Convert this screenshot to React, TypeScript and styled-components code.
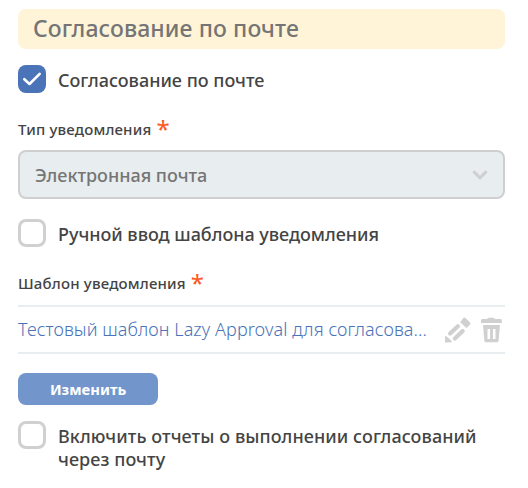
import React from "react";
import styled, { createGlobalStyle } from "styled-components";

const GlobalStyle = createGlobalStyle`
  * { box-sizing: border-box; }
  body { margin: 0; background: #fff; font-family: "Noto Sans", "Open Sans", sans-serif; }
`;

const Form = styled.main`
  width: 528px;
  height: 488px;
  padding: 9px 23px 0 18px;
  overflow: hidden;
  color: #444;
`;

const Title = styled.h1`
  height: 40px;
  margin: 0 0 16px;
  padding-left: 15px;
  border-radius: 8px;
  background: #fff4d7;
  color: #757575;
  font-size: 23px;
  font-weight: 500;
  letter-spacing: 0.1px;
  line-height: 39px;
`;

const CheckRow = styled.label<{ $gap: number }>`
  display: flex;
  gap: 12px;
  height: 28px;
  margin-bottom: ${(p) => p.$gap}px;
`;

const Box = styled.span<{ $checked?: boolean }>`
  display: flex;
  flex: none;
  align-items: center;
  justify-content: center;
  width: 28px;
  height: 28px;
  border: ${(p) => (p.$checked ? "none" : "3px solid #d0d0d0")};
  border-radius: 8px;
  background: ${(p) => (p.$checked ? "#4a73b8" : "#fff")};
`;

const CheckText = styled.span<{ $spacing?: number }>`
  padding-top: 4px;
  font-size: 18px;
  font-weight: 500;
  letter-spacing: ${(p) => p.$spacing ?? 0}px;
  line-height: 23px;
`;

const FieldLabel = styled.div<{ $gap: number }>`
  display: flex;
  gap: 5px;
  height: 20px;
  margin-bottom: ${(p) => p.$gap}px;
  font-size: 15px;
  font-weight: 500;
  letter-spacing: 0.18px;
  line-height: 20px;
`;

const Required = styled.span`
  color: #ff5722;
  font-size: 24px;
  font-weight: 400;
  line-height: 20px;
`;

const Select = styled.div`
  display: flex;
  align-items: center;
  justify-content: space-between;
  height: 49px;
  margin-bottom: 20px;
  padding: 0 15px;
  border: 2px solid #cfcfcf;
  border-radius: 8px;
  background: #e8edef;
  color: #757575;
  font-size: 18px;
  font-weight: 500;
`;

const Template = styled.div`
  display: flex;
  align-items: center;
  height: 49px;
  margin-bottom: 19px;
  border: solid #e8edf0;
  border-width: 2px 0;
`;

const TemplateLink = styled.a`
  width: 410px;
  margin-right: 17px;
  color: #4a73b8;
  font-size: 18px;
  font-weight: 300;
  letter-spacing: 0.08px;
  line-height: 26px;
  padding-bottom: 1px;
  white-space: nowrap;
`;

const Icons = styled.div`
  display: flex;
  gap: 9px;
  color: #d0d0d0;
`;

const Button = styled.button`
  display: block;
  width: 140px;
  height: 32px;
  margin: 0 0 16px;
  padding: 0;
  border: 0;
  border-radius: 8px;
  background: #7295cc;
  color: #fff;
  font: 700 14.8px/31px "Noto Sans", sans-serif;
`;

export default function App() {
  return (
    <>
      <GlobalStyle />
      <Form>
        <Title>Согласование по почте</Title>
        <CheckRow $gap={26}>
          <Box $checked>
            <svg width="28" height="28" viewBox="0 0 28 28" fill="none" stroke="#fff" strokeWidth="2.6" strokeLinecap="round" strokeLinejoin="round">
              <path d="M6.3 14.2 11.5 19 21.7 8.8" />
            </svg>
          </Box>
          <CheckText>Согласование по почте</CheckText>
        </CheckRow>
        <FieldLabel $gap={11}>
          Тип уведомления <Required>*</Required>
        </FieldLabel>
        <Select>
          Электронная почта
          <svg width="16" height="10" viewBox="0 0 16 10" fill="none" stroke="#cfcfcf" strokeWidth="3" strokeLinecap="round" strokeLinejoin="round">
            <path d="M2.2 2.2 8 7.8 13.8 2.2" />
          </svg>
        </Select>
        <CheckRow $gap={26}>
          <Box />
          <CheckText $spacing={-0.03}>Ручной ввод шаблона уведомления</CheckText>
        </CheckRow>
        <FieldLabel $gap={12}>
          Шаблон уведомления <Required>*</Required>
        </FieldLabel>
        <Template>
          <TemplateLink>Тестовый шаблон Lazy Approval для согласова...</TemplateLink>
          <Icons>
            <svg width="26" height="26" viewBox="0 0 26 26" fill="currentColor">
              <path d="M0 25.5V19.4Q.4 18.7 1.1 19.1L6.9 24.3Q7 25.1 6.1 25.2Z" />
              <g fill="none" stroke="currentColor" strokeWidth="4.2" strokeLinecap="round">
                <path d="M5.1 16.6 12.9 9.2M9.9 21.5 17.7 14.1" />
              </g>
              <path d="M15.2 5.2 18.3 1.1Q19.4-.1 20.5 1L25 5.5Q26 6.6 24.8 7.8L21.4 11Z" />
            </svg>
            <svg width="22" height="26" viewBox="-1 0 22 26" fill="currentColor" fillRule="evenodd">
              <path d="M0 6V3.2Q0 2 1.2 2H6.5V1.6Q6.5 .7 7.5 .7H12.5Q13.5 .7 13.5 1.6V2H19.5Q20.8 2 20.8 3.2V6Z" />
              <path d="M2 8H19L17.5 24Q17.3 25.3 16 25.3H5Q3.6 25.3 3.4 24ZM6.5 12V22H9.1V12ZM11.9 12V22H14.5V12Z" />
            </svg>
          </Icons>
        </Template>
        <Button>Изменить</Button>
        <CheckRow $gap={0}>
          <Box />
          <CheckText $spacing={0.07}>Включить отчеты о выполнении согласований через почту</CheckText>
        </CheckRow>
      </Form>
    </>
  );
}
